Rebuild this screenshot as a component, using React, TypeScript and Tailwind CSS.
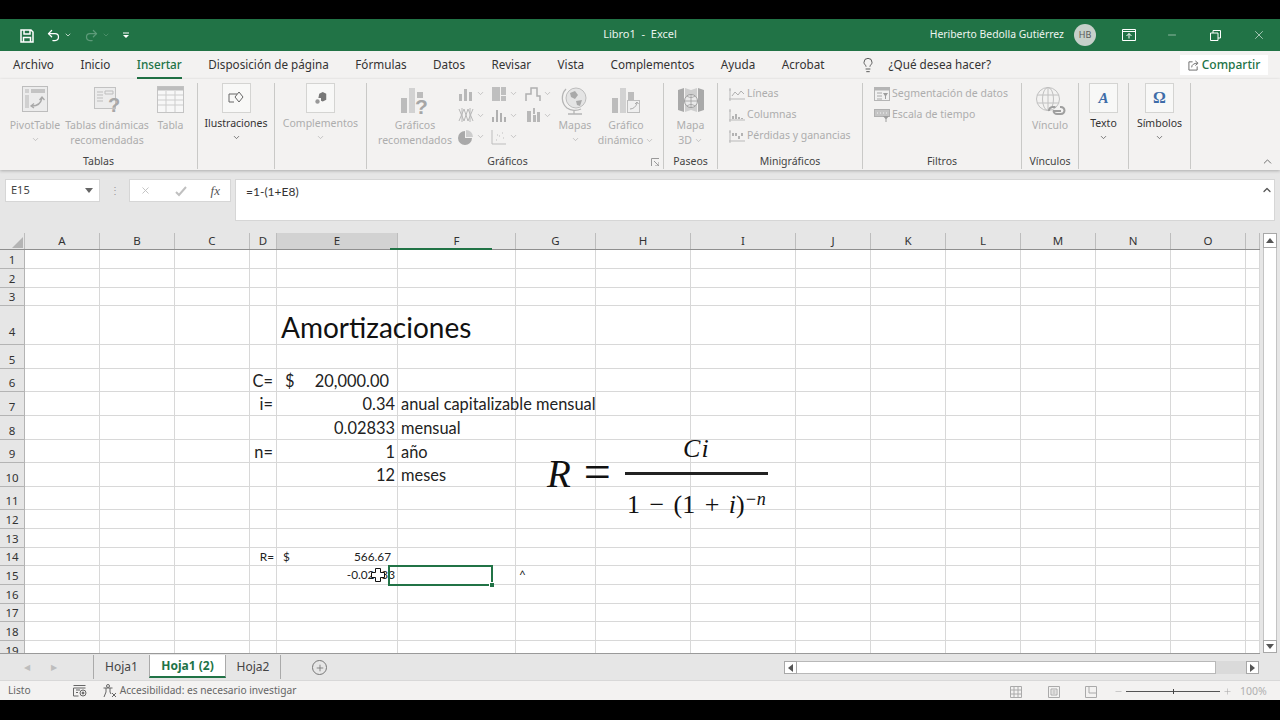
import React from "react"
import { ChevronDown, ChevronUp, Lightbulb, Undo2, Redo2, Minus, X, Plus } from "lucide-react"

const colWidths = [
  { name: "A", w: "w-[75px]" },
  { name: "B", w: "w-[75px]" },
  { name: "C", w: "w-[75px]" },
  { name: "D", w: "w-[27px]" },
  { name: "E", w: "w-[121px]" },
  { name: "F", w: "w-[118px]" },
  { name: "G", w: "w-[80px]" },
  { name: "H", w: "w-[95px]" },
  { name: "I", w: "w-[105px]" },
  { name: "J", w: "w-[75px]" },
  { name: "K", w: "w-[75px]" },
  { name: "L", w: "w-[75px]" },
  { name: "M", w: "w-[75px]" },
  { name: "N", w: "w-[75px]" },
  { name: "O", w: "w-[75px]" },
  { name: "", w: "w-[14px]" },
]

const rowHeights = [
  "h-[19px]", "h-[19px]", "h-[18px]", "h-[39px]", "h-[24px]", "h-[23px]", "h-[24px]", "h-[24px]", "h-[23px]", "h-[24px]",
  "h-[23px]", "h-[19px]", "h-[19px]", "h-[18px]", "h-[19px]", "h-[19px]", "h-[18px]", "h-[19px]", "h-[19px]",
]

const big = "text-[16.4px] text-[#222] mt-[2px]"
const small = "text-[11.8px] text-[#222]"

const cells: Record<string, React.ReactNode> = {
  E4: <span className="absolute left-[4px] mt-[3px] text-[28px] text-[#111]">Amortizaciones</span>,
  D6: <span className={`absolute right-[3px] ${big}`}>C=</span>,
  E6: (
    <span className={`absolute inset-x-0 flex justify-between pl-[8px] pr-[8px] ${big}`}>
      <span>$</span>
      <span>20,000.00</span>
    </span>
  ),
  D7: <span className={`absolute right-[3px] ${big}`}>i=</span>,
  E7: <span className={`absolute right-[2px] ${big}`}>0.34</span>,
  F7: <span className={`absolute left-[3px] ${big}`}>anual capitalizable mensual</span>,
  E8: <span className={`absolute right-[2px] ${big}`}>0.02833</span>,
  F8: <span className={`absolute left-[3px] ${big}`}>mensual</span>,
  D9: <span className={`absolute right-[3px] ${big}`}>n=</span>,
  E9: <span className={`absolute right-[2px] ${big}`}>1</span>,
  F9: <span className={`absolute left-[3px] ${big}`}>año</span>,
  E10: <span className={`absolute right-[2px] ${big}`}>12</span>,
  F10: <span className={`absolute left-[3px] ${big}`}>meses</span>,
  D14: <span className={`absolute right-[2px] ${small}`}>R=</span>,
  E14: (
    <span className={`absolute inset-x-0 flex justify-between pl-[6px] pr-[6px] ${small}`}>
      <span>$</span>
      <span>566.67</span>
    </span>
  ),
  E15: <span className={`absolute right-[2px] ${small}`}>-0.02833</span>,
  G15: <span className={`absolute left-[3px] ${small}`}>^</span>,
}

function Chev({ light }: { light?: boolean }) {
  return <ChevronDown className={`w-[9px] h-[9px] ${light ? "text-[#b5b5b5]" : "text-[#555]"}`} strokeWidth={2} />
}

function PivotIcon() {
  return (
    <svg viewBox="0 0 26 26" className="w-[26px] h-[26px]" fill="none">
      <rect x="0.5" y="0.5" width="25" height="25" fill="#ececec" stroke="#bdbdbd" />
      <rect x="3" y="3" width="4" height="4" fill="#d0d0d0" />
      <rect x="9" y="3" width="14" height="4" fill="#c4c4c4" />
      <rect x="3" y="9" width="4" height="13" fill="#d0d0d0" />
      <path d="M10 20c5 0 9-3 10-8M17.5 14l2.500-3 2.500 3M12 17.500l-3 2.500 3 2" stroke="#a9a9a9" strokeWidth="1.300" />
    </svg>
  )
}

function RecTableIcon() {
  return (
    <svg viewBox="0 0 28 28" className="w-[28px] h-[28px]" fill="none">
      <rect x="1.500" y="1.500" width="21" height="21" fill="#ececec" stroke="#c2c2c2" />
      <path d="M4 6h6M4 9h6M4 12h6M4 15h6M12 5h8v3h-8z" stroke="#bdbdbd" />
      <text x="15" y="26" fontSize="20" fontWeight="700" fill="#a8a8a8" fontFamily="Liberation Sans">?</text>
    </svg>
  )
}

function TableIcon() {
  return (
    <svg viewBox="0 0 27 27" className="w-[27px] h-[27px]" fill="none">
      <rect x="0.500" y="0.500" width="26" height="26" fill="#f7f7f7" stroke="#c4c4c4" />
      <rect x="0.500" y="0.500" width="26" height="4" fill="#bdbdbd" />
      <path d="M1 9h25M1 14h25M1 19h25M9 5v21M18 5v21" stroke="#cdcdcd" />
    </svg>
  )
}

function ChartRecIcon() {
  return (
    <svg viewBox="0 0 30 28" className="w-[30px] h-[28px]" fill="none">
      <rect x="1" y="12" width="6" height="15" fill="#bcbcbc" />
      <rect x="9" y="2" width="6" height="25" fill="#d2d2d2" />
      <rect x="17" y="6" width="6" height="6" fill="#bcbcbc" />
      <text x="15" y="28" fontSize="21" fontWeight="700" fill="#a6a6a6" fontFamily="Liberation Sans">?</text>
    </svg>
  )
}

function SmallChart({ kind }: { kind: string }) {
  return (
    <svg viewBox="0 0 16 16" className="w-[16px] h-[16px]" fill="none">
      {kind === "bar" && <path d="M1 8h3v7H1zM6 3h3v12H6zM11 6h3v9h-3z" fill="#b8b8b8" />}
      {kind === "tree" && <path d="M1 1h8v14H1zM10 1h5v8h-5zM10 10h5v5h-5z" fill="#bfbfbf" />}
      {kind === "step" && <path d="M1 15V8h5V2h6v8h3v5" stroke="#b0b0b0" strokeWidth="1.500" />}
      {kind === "stock" && <path d="M1 2l5 12 4-12 5 12M1 14l5-12 4 12 5-12M4 1v14M12 1v14" stroke="#b8b8b8" />}
      {kind === "hist" && <path d="M1 10h2v5H1zM5 3h2v12H5zM9 6h2v9H9zM13 10h2v5h-2z" fill="#b0b0b0" />}
      {kind === "box" && <path d="M2 4h4v11H2zM8 1h2v6H8zM8 8h3v7H8zM12 5h3v10h-3z" fill="#b8b8b8" />}
      {kind === "pie" && (
        <>
          <path d="M8 8V1a7 7 0 0 1 7 7z" fill="#cdcdcd" />
          <path d="M7 2v7h7a7 7 0 1 1-7-7z" fill="#a9a9a9" />
        </>
      )}
      {kind === "scatter" && (
        <path d="M1 1v14h14M5 11h1M8 7h1M11 4h1M6 6h1M12 9h1" stroke="#bdbdbd" />
      )}
    </svg>
  )
}

function GlobeIcon() {
  return (
    <svg viewBox="0 0 28 30" className="w-[28px] h-[30px]" fill="none">
      <circle cx="15" cy="12" r="10" fill="#e4e4e4" stroke="#bdbdbd" />
      <path d="M9 7l5-2 3 4-3 4-4-2zM15 15l6-1-2 6-3-1z" fill="#a9a9a9" />
      <path d="M5 3a13 13 0 0 0 1 19c4 3 10 3 14 1M13 25v3M7 28h14" stroke="#b5b5b5" strokeWidth="1.300" />
    </svg>
  )
}

function PivotChartIcon() {
  return (
    <svg viewBox="0 0 30 28" className="w-[30px] h-[28px]" fill="none">
      <rect x="1" y="12" width="6" height="15" fill="#bcbcbc" />
      <rect x="9" y="2" width="6" height="25" fill="#d2d2d2" />
      <rect x="17" y="6" width="6" height="8" fill="#bcbcbc" />
      <rect x="16.500" y="14.500" width="12" height="12" fill="#efefef" stroke="#bdbdbd" />
      <path d="M19 23c3 0 6-2 7-6M24 18l2-2 1.500 2" stroke="#aaa" />
    </svg>
  )
}

function Map3DIcon() {
  return (
    <svg viewBox="0 0 28 28" className="w-[28px] h-[28px]" fill="none">
      <path d="M1 4l6-2v24l-6-2zM21 2l6 2v20l-6 2z" fill="#a9a9a9" />
      <path d="M8 2l6 2v20l-6 2zM14 4l6-2v24l-6-2z" fill="#cfcfcf" />
      <circle cx="14" cy="15" r="6.500" fill="#e9e9e9" stroke="#9d9d9d" />
      <path d="M7.500 15h13M14 8.500v13M10 10c3 2 5 2 8 0M10 20c3-2 5-2 8 0" stroke="#9d9d9d" strokeWidth="0.800" />
    </svg>
  )
}

function SparkIcon({ kind }: { kind: string }) {
  return (
    <svg viewBox="0 0 16 14" className="w-[16px] h-[14px]" fill="none">
      <path d="M1 1v13M0 12h16M0 3h2" stroke="#b9b9b9" />
      {kind === "line" && <path d="M3 9l3-4 3 3 3-4 3 3" stroke="#b0b0b0" />}
      {kind === "col" && <path d="M4 11V8M7 11V6M10 11V9M13 11V10" stroke="#9f9f9f" strokeWidth="1.500" />}
      {kind === "wl" && <path d="M4 4v3M7 4v3M10 7v3M13 4v3" stroke="#9f9f9f" strokeWidth="1.500" />}
    </svg>
  )
}

function SlicerIcon() {
  return (
    <svg viewBox="0 0 16 14" className="w-[16px] h-[14px]" fill="none">
      <rect x="0.500" y="0.500" width="15" height="13" fill="#f1f1f1" stroke="#b5b5b5" />
      <rect x="1" y="1" width="14" height="2.500" fill="#b5b5b5" />
      <path d="M3 6h5M3 9h5M3 12h5" stroke="#a8a8a8" />
      <path d="M9 6h5l-2 3v3h-1V9z" fill="#9d9d9d" />
    </svg>
  )
}

function TimelineIcon() {
  return (
    <svg viewBox="0 0 16 14" className="w-[16px] h-[14px]" fill="none">
      <rect x="0.500" y="1.500" width="15" height="7" fill="#c4c4c4" stroke="#b0b0b0" />
      <path d="M3 5h1M6 5h1M9 5h1M12 5h1" stroke="#f5f5f5" />
      <path d="M9 8h6l-2.500 3v3h-1v-3z" fill="#9d9d9d" />
    </svg>
  )
}

function LinkGlobeIcon() {
  return (
    <svg viewBox="0 0 32 32" className="w-[32px] h-[32px]" fill="none">
      <circle cx="14" cy="13" r="11.500" stroke="#c0c0c0" />
      <ellipse cx="14" cy="13" rx="5.500" ry="11.500" stroke="#c0c0c0" />
      <path d="M3 9h22M3 17h22M14 1.500v23" stroke="#c0c0c0" />
      <path d="M15 25a3.500 3.500 0 0 1 3.500-4h3M26 21h1a3.500 3.500 0 0 1 0 7h-4a3.500 3.500 0 0 1-3.500-3.500M19 25h8" stroke="#9f9f9f" strokeWidth="2" />
    </svg>
  )
}

function BigBtn({
  width,
  icon,
  lines,
  disabled,
  chevron,
  boxed,
  inlineChev,
}: {
  width: string
  icon: React.ReactNode
  lines: string[]
  disabled?: boolean
  chevron?: boolean
  boxed?: boolean
  inlineChev?: boolean
}) {
  return (
    <div className={`flex flex-col items-center shrink-0 ${width}`}>
      {boxed ? (
        <div className="w-[29px] h-[30px] bg-[#f8f8f7] border border-[#d4d4d2] flex items-center justify-center">{icon}</div>
      ) : (
        <div className="h-[35px] pt-[3px] flex items-start justify-center">{icon}</div>
      )}
      <div className={`text-[10.5px] leading-[15px] text-center whitespace-nowrap ${boxed ? "mt-[3px]" : ""} ${disabled ? "text-[#adadad]" : "text-[#333]"}`}>
        {lines.map((l, i) => (
          <div key={l} className="flex items-center justify-center gap-[2px]">
            {l}
            {inlineChev && i === lines.length - 1 && <Chev light />}
          </div>
        ))}
      </div>
      {chevron && (
        <div className="mt-[2px]">
          <Chev light={disabled} />
        </div>
      )}
    </div>
  )
}

function Group({
  className,
  label,
  labelClass,
  children,
}: {
  className: string
  label?: string
  labelClass?: string
  children: React.ReactNode
}) {
  return (
    <div className={`h-[86px] shrink-0 flex flex-col border-r border-[#c9c9c7] relative ${className}`}>
      <div className="flex-1 flex items-start min-h-0">{children}</div>
      <div className={`h-[15px] text-[10.5px] leading-[15px] text-[#444] text-center ${labelClass ?? ""}`}>{label}</div>
    </div>
  )
}

function SmallRow({ icon, label }: { icon: React.ReactNode; label: string }) {
  return (
    <div className="h-[21px] flex items-center gap-[2px] text-[10.5px] text-[#adadad] whitespace-nowrap">
      {icon}
      {label}
    </div>
  )
}

function ChartCell({ kind }: { kind: string }) {
  return (
    <div className="h-[21px] w-[33px] flex items-center gap-[2px]">
      <SmallChart kind={kind} />
      <Chev light />
    </div>
  )
}

function Ribbon() {
  return (
    <div className="h-[91px] bg-[#f3f2f1] flex pt-[4px] shadow-[0_1px_3px_rgba(0,0,0,0.25)] relative">
      <Group className="w-[198px]" label="Tablas">
        <div className="flex pl-[9px]">
          <BigBtn width="w-[52px]" icon={<PivotIcon />} lines={["PivotTable"]} disabled chevron />
          <BigBtn width="w-[84px] ml-[4px]" icon={<RecTableIcon />} lines={["Tablas dinámicas", "recomendadas"]} disabled />
          <BigBtn width="w-[27px] ml-[8px]" icon={<TableIcon />} lines={["Tabla"]} disabled />
        </div>
      </Group>
      <Group className="w-[77px]">
        <BigBtn
          width="w-full"
          boxed
          icon={
            <svg viewBox="0 0 16 16" className="w-[16px] h-[16px]" fill="none" stroke="#666">
              <path d="M6 12H1V4h8M7 7l4-5 4 5-4 5z" />
            </svg>
          }
          lines={["Ilustraciones"]}
          chevron
        />
      </Group>
      <Group className="w-[92px]">
        <BigBtn
          width="w-full"
          boxed
          disabled
          icon={
            <svg viewBox="0 0 16 16" className="w-[14px] h-[14px]">
              <path d="M6 3l4-2 4 2v7l-4 2-2-1V8H5z" fill="#777" />
              <circle cx="4" cy="12" r="2.500" fill="#999" />
            </svg>
          }
          lines={["Complementos"]}
          chevron
        />
      </Group>
      <Group className="w-[297px]" label="Gráficos" labelClass="pr-[15px]">
        <div className="flex">
          <BigBtn width="w-[76px] ml-[10px]" icon={<ChartRecIcon />} lines={["Gráficos", "recomendados"]} disabled />
          <div className="w-[100px] ml-[5px] grid grid-cols-3">
            <ChartCell kind="bar" />
            <ChartCell kind="tree" />
            <ChartCell kind="step" />
            <ChartCell kind="stock" />
            <ChartCell kind="hist" />
            <ChartCell kind="box" />
            <ChartCell kind="pie" />
            <ChartCell kind="scatter" />
          </div>
          <BigBtn width="w-[40px] ml-[-3px]" icon={<GlobeIcon />} lines={["Mapas"]} disabled chevron />
          <BigBtn width="w-[60px] ml-[1px]" icon={<PivotChartIcon />} lines={["Gráfico", "dinámico"]} disabled inlineChev />
        </div>
        <svg viewBox="0 0 8 8" className="absolute right-[4px] bottom-[3px] w-[8px] h-[8px]" fill="none" stroke="#999">
          <path d="M0.500 8V0.500H8M3 3l5 5M8 4v4H4" />
        </svg>
      </Group>
      <Group className="w-[54px]" label="Paseos">
        <BigBtn width="w-full" icon={<Map3DIcon />} lines={["Mapa", "3D"]} disabled inlineChev />
      </Group>
      <Group className="w-[145px]" label="Minigráficos">
        <div className="pl-[11px] flex flex-col">
          <SmallRow icon={<SparkIcon kind="line" />} label="Líneas" />
          <SmallRow icon={<SparkIcon kind="col" />} label="Columnas" />
          <SmallRow icon={<SparkIcon kind="wl" />} label="Pérdidas y ganancias" />
        </div>
      </Group>
      <Group className="w-[159px]" label="Filtros">
        <div className="pl-[11px] flex flex-col">
          <SmallRow icon={<SlicerIcon />} label="Segmentación de datos" />
          <SmallRow icon={<TimelineIcon />} label="Escala de tiempo" />
        </div>
      </Group>
      <Group className="w-[57px]" label="Vínculos">
        <BigBtn width="w-full" icon={<LinkGlobeIcon />} lines={["Vínculo"]} disabled />
      </Group>
      <Group className="w-[50px]">
        <BigBtn
          width="w-full"
          boxed
          icon={<span className="text-[15px] leading-none font-bold italic text-[#3e6ca8] font-['Liberation_Serif',serif]">A</span>}
          lines={["Texto"]}
          chevron
        />
      </Group>
      <Group className="w-[62px]">
        <BigBtn
          width="w-full"
          boxed
          icon={<span className="text-[16px] leading-none font-bold text-[#3e6ca8] font-['Liberation_Serif',serif]">Ω</span>}
          lines={["Símbolos"]}
          chevron
        />
      </Group>
      <ChevronUp className="absolute right-[6px] bottom-[2px] w-[13px] h-[13px] text-[#555]" strokeWidth={1.500} />
    </div>
  )
}

function TitleBar() {
  return (
    <div className="h-[32px] bg-[#217346] flex items-center text-white">
      <div className="w-[560px] flex items-center pl-[20px]">
        <svg viewBox="0 0 14 14" className="w-[14px] h-[14px] mt-[2px]" fill="none" stroke="white" strokeWidth="1.500">
          <path d="M1 1h10l2 2v10H1zM4 1v4h6V1M3.500 13V8.500h7V13" />
        </svg>
        <Undo2 className="w-[15px] h-[15px] ml-[12px]" strokeWidth={2} />
        <ChevronDown className="w-[8px] h-[8px] ml-[3px]" strokeWidth={2} />
        <Redo2 className="w-[15px] h-[15px] ml-[12px] text-[#5d9a79]" strokeWidth={2} />
        <ChevronDown className="w-[8px] h-[8px] ml-[3px] text-[#5d9a79]" strokeWidth={2} />
        <svg viewBox="0 0 8 8" className="w-[8px] h-[8px] ml-[12px]" fill="white">
          <path d="M1 1.500h6v1H1zM1 4h6L4 7z" />
        </svg>
      </div>
      <div className="w-[160px] text-center text-[11px] text-[#e9f2ec] mb-[2px]">Libro1&nbsp; -&nbsp; Excel</div>
      <div className="flex-1 flex items-center justify-end">
        <span className="text-[10.4px] text-[#eef5f0]">Heriberto Bedolla Gutiérrez</span>
        <div className="w-[22px] h-[22px] ml-[10px] rounded-full bg-[#c6d0ca] text-[#5a5a5a] text-[9px] flex items-center justify-center">HB</div>
        <svg viewBox="0 0 14 12" className="w-[14px] h-[12px] ml-[26px]" fill="none" stroke="white">
          <path d="M0.500 0.500h13v11H0.500zM0.500 2.500h13M7 9.500V4.500M4.500 7L7 4.500 9.500 7" />
        </svg>
        <Minus className="w-[12px] h-[12px] ml-[30px]" strokeWidth={1} />
        <svg viewBox="0 0 11 11" className="w-[11px] h-[11px] ml-[32px]" fill="none" stroke="white">
          <path d="M0.500 3h7.500v7.500H0.500zM3 3V0.500h7.500V8H8" />
        </svg>
        <X className="w-[14px] h-[14px] ml-[31px] mr-[14px]" strokeWidth={1} />
      </div>
    </div>
  )
}

function TabsBar() {
  const tabs = ["Archivo", "Inicio", "Insertar", "Disposición de página", "Fórmulas", "Datos", "Revisar", "Vista", "Complementos", "Ayuda", "Acrobat"]
  return (
    <div className="h-[28px] bg-[#f3f2f1] flex items-center pl-[13px] text-[11.7px] text-[#333] relative">
      <div className="flex gap-[26.5px]">
        {tabs.map((t) => (
          <div key={t} className={`relative ${t === "Insertar" ? "text-[#217346] font-medium" : ""}`}>
            {t}
            {t === "Insertar" && <div className="absolute left-0 right-0 bottom-[-5px] h-[2px] bg-[#217346]" />}
          </div>
        ))}
      </div>
      <Lightbulb className="w-[16px] h-[16px] ml-[36px] text-[#444]" strokeWidth={1.300} />
      <span className="ml-[12px]">¿Qué desea hacer?</span>
      <div className="absolute right-[12px] top-[4px] w-[88px] h-[20px] bg-white flex items-center justify-center gap-[3px] text-[#217346] text-[12px] font-medium">
        <svg viewBox="0 0 12 12" className="w-[11px] h-[11px]" fill="none" stroke="#666">
          <path d="M5 2H1v9h9V7M4 8c0-3 3-4.500 6-4.500M8 1l3 2.500L8 6" />
        </svg>
        Compartir
      </div>
    </div>
  )
}

function FormulaBar() {
  return (
    <div className="h-[63px] bg-[#e6e6e6] flex items-start pt-[9px] pl-[5px] text-[11px] text-[#444]">
      <div className="w-[95px] h-[23px] bg-white border border-[#d6d6d6] flex items-center justify-between pl-[5px] pr-[6px]">
        E15
        <svg viewBox="0 0 8 5" className="w-[8px] h-[5px]" fill="#666">
          <path d="M0 0h8L4 5z" />
        </svg>
      </div>
      <div className="w-[29px] h-[23px] flex items-center justify-center text-[#999] text-[10px]">⋮</div>
      <div className="w-[102px] h-[23px] bg-white border border-[#d6d6d6] flex items-center justify-between px-[10px]">
        <X className="w-[11px] h-[11px] text-[#c0c0c0]" strokeWidth={2} />
        <svg viewBox="0 0 12 12" className="w-[12px] h-[12px]" fill="none" stroke="#c0c0c0" strokeWidth="2">
          <path d="M1 7l3 3 7-8" />
        </svg>
        <span className="italic font-['Liberation_Serif',serif] text-[13px] text-[#555]">fx</span>
      </div>
      <div className="w-[1040px] h-[42px] ml-[4px] bg-white border border-[#d6d6d6] pl-[10px] pt-[3px] relative font-['Lato',sans-serif] text-[12px] text-[#333]">
        =1-(1+E8)
        <ChevronUp className="absolute right-[1px] top-[4px] w-[12px] h-[12px] text-[#555]" strokeWidth={2.500} />
      </div>
    </div>
  )
}

function Grid() {
  return (
    <div className="relative h-[422px] flex bg-[#e6e6e6] overflow-hidden">
      <div className="w-[1260px] shrink-0 flex flex-col h-[421px] border-b border-[#9a9a9a] overflow-hidden">
        <div className="h-[17px] shrink-0 flex bg-[#e6e6e6] border-b border-[#8f8f8f]">
          <div className="w-[25px] shrink-0 border-r border-[#bdbdbd] relative">
            <svg viewBox="0 0 12 12" className="absolute right-[1px] bottom-[1px] w-[11px] h-[11px]">
              <path d="M12 0v12H0z" fill="#b4b4b4" />
            </svg>
          </div>
          {colWidths.map((c) => (
            <div
              key={c.name || "end"}
              className={`shrink-0 ${c.w} border-r border-[#bdbdbd] text-[11.5px] leading-[15px] text-center text-[#333] ${c.name === "E" ? "bg-[#d2d2d2]" : ""}`}
            >
              {c.name}
            </div>
          ))}
        </div>
        <div className="flex-1 min-h-0 flex flex-col bg-white border-r border-[#9a9a9a] font-['Lato',sans-serif]">
          {rowHeights.map((h, r) => (
            <div key={r} className={`${h} shrink-0 flex`}>
              <div
                className={`w-[25px] shrink-0 bg-[#e6e6e6] border-r border-b border-[#b4b4b4] text-[11.5px] text-center text-[#333] flex items-end justify-center font-['Noto_Sans',sans-serif] ${r === 14 ? "bg-[#d2d2d2]" : ""} ${r === 3 ? "pb-[4px]" : ""}`}
              >
                {r + 1}
              </div>
              {colWidths.map((c) => (
                <div
                  key={c.name || "end"}
                  className={`shrink-0 ${c.w} border-r border-b border-[#d8d8d8] relative flex items-center whitespace-nowrap`}
                >
                  {cells[`${c.name}${r + 1}`]}
                </div>
              ))}
            </div>
          ))}
        </div>
      </div>
      <div className="flex-1 flex flex-col items-center pb-[2px] px-[3px]">
        <div className="w-[14px] h-[15px] bg-white border border-[#a8a8a8] flex items-center justify-center">
          <svg viewBox="0 0 8 5" className="w-[8px] h-[5px]" fill="#555">
            <path d="M4 0l4 5H0z" />
          </svg>
        </div>
        <div className="flex-1 w-[14px] bg-white border-x border-[#c4c4c4]" />
        <div className="w-[14px] h-[13px] bg-white border border-[#a8a8a8] flex items-center justify-center">
          <svg viewBox="0 0 8 5" className="w-[8px] h-[5px]" fill="#555">
            <path d="M0 0h8L4 5z" />
          </svg>
        </div>
      </div>

      {/* active column underline and selected cell */}
      <div className="absolute left-[390px] top-[15px] w-[102px] h-[2px] bg-[#217346]" />
      <div className="absolute left-[388px] top-[332px] w-[105px] h-[21px] border-2 border-[#217346]">
        <div className="absolute right-[-3px] bottom-[-3px] w-[5px] h-[5px] bg-[#217346] border-l border-t border-white" />
      </div>
      <svg viewBox="0 0 14 14" className="absolute left-[371px] top-[335px] w-[14px] h-[14px]">
        <path d="M4.500 0.500h5v4h4v5h-4v4h-5v-4h-4v-5h4z" fill="white" stroke="#111" />
      </svg>

      {/* floating equation */}
      <div className="absolute left-[547px] top-[194px] h-[93px] flex items-center font-['Liberation_Serif',serif] text-[#111]">
        <span className="italic text-[39px] leading-none">R</span>
        <span className="text-[48px] leading-none ml-[13px] mb-[4px]">=</span>
        <div className="ml-[14px] w-[143px] flex flex-col items-center">
          <div className="h-[45px] flex items-end pb-[8px]">
            <span className="italic text-[26px] leading-[30px] tracking-[1px]">Ci</span>
          </div>
          <div className="w-full h-[3px] bg-[#222]" />
          <div className="h-[45px] pt-[15px] w-full whitespace-nowrap flex items-start justify-between px-[2px] text-[26px] leading-[30px]">
            <span>1</span>
            <span>−</span>
            <span>(1</span>
            <span>+</span>
            <span className="flex items-start">
              <span className="italic">i</span>)
              <span className="text-[18px] leading-[18px] italic">−n</span>
            </span>
          </div>
        </div>
      </div>
    </div>
  )
}

function SheetTabs() {
  return (
    <div className="h-[25px] bg-[#e6e6e6] flex items-start text-[12px] text-[#444] relative">
      <div className="w-[94px] h-[24px] flex items-center pl-[24px] gap-[21px] text-[#bdbdbd] text-[8px] border-r border-[#aaa]">
        <span>◀</span>
        <span>▶</span>
      </div>
      <div className="w-[55px] h-[24px] flex items-center justify-center">Hoja1</div>
      <div className="w-[77px] h-[23px] pt-[1px] bg-white border-x border-b-2 border-x-[#aaa] border-b-[#217346] flex items-center justify-center font-bold text-[#217346]">Hoja1 (2)</div>
      <div className="w-[55px] h-[24px] flex items-center justify-center border-r border-[#aaa]">Hoja2</div>
      <div className="ml-[31px] mt-[5px] w-[15px] h-[15px] rounded-full border border-[#777] flex items-center justify-center">
        <Plus className="w-[10px] h-[10px] text-[#777]" strokeWidth={2} />
      </div>
      <div className="absolute left-[784px] top-[6px] w-[475px] h-[13px] flex">
        <div className="w-[13px] h-[13px] bg-white border border-[#a8a8a8] flex items-center justify-center">
          <svg viewBox="0 0 5 8" className="w-[5px] h-[8px]" fill="#555">
            <path d="M5 0v8L0 4z" />
          </svg>
        </div>
        <div className="w-[419px] bg-white border-y border-r border-[#b8b8b8]" />
        <div className="flex-1 bg-[#dadada]" />
        <div className="w-[13px] h-[13px] bg-white border border-[#a8a8a8] flex items-center justify-center">
          <svg viewBox="0 0 5 8" className="w-[5px] h-[8px]" fill="#555">
            <path d="M0 0v8l5-4z" />
          </svg>
        </div>
      </div>
    </div>
  )
}

function StatusBar() {
  return (
    <div className="h-[20px] bg-[#f3f2f1] border-t border-[#d8d8d8] flex items-center text-[10.2px] text-[#666] pl-[8px] relative">
      Listo
      <svg viewBox="0 0 14 12" className="w-[14px] h-[12px] ml-[42px]" fill="none" stroke="#666">
        <path d="M0.500 0.500h12M0.500 3h12M0.500 3v8h5M3 5h4M3 7.500h2" />
        <circle cx="10" cy="8" r="3" />
        <circle cx="10" cy="8" r="1" fill="#666" />
      </svg>
      <svg viewBox="0 0 14 14" className="w-[14px] h-[14px] ml-[16px]" fill="none" stroke="#666">
        <circle cx="5" cy="2" r="1.500" />
        <path d="M0.500 4h9M3 4v4l-2 5M7 4v4l1 2M9 9l4 4M13 9l-4 4" />
      </svg>
      <span className="ml-[3px]">Accesibilidad: es necesario investigar</span>
      <div className="absolute left-[1010px] top-[3px] flex items-center text-[#aaa]">
        <svg viewBox="0 0 12 12" className="w-[12px] h-[12px]" fill="none" stroke="#aaa">
          <path d="M0.500 0.500h11v11h-11zM4 0.500v11M8 0.500v11M0.500 4h11M0.500 8h11" />
        </svg>
        <svg viewBox="0 0 12 12" className="w-[12px] h-[12px] ml-[26px]" fill="none" stroke="#aaa">
          <path d="M0.500 0.500h11v11h-11zM3 3h6v6H3zM4.500 5h3M4.500 7h3" />
        </svg>
        <svg viewBox="0 0 12 12" className="w-[12px] h-[12px] ml-[25px]" fill="none" stroke="#aaa">
          <path d="M0.500 0.500h11v11h-11zM4 0.500V7h7.500" />
        </svg>
        <Minus className="w-[9px] h-[9px] ml-[17px]" strokeWidth={1.500} />
        <div className="w-[94px] h-px bg-[#555] ml-[3px] relative">
          <div className="absolute left-[47px] top-[-2px] w-px h-[5px] bg-[#444]" />
        </div>
        <Plus className="w-[9px] h-[9px] ml-[3px]" strokeWidth={1.500} />
        <span className="ml-[8px] text-[10.5px] text-[#b0b0b0]">100%</span>
      </div>
    </div>
  )
}

export default function App() {
  return (
    <div className="w-[1280px] h-[720px] overflow-hidden bg-black flex flex-col font-['Noto_Sans','Open_Sans',sans-serif]">
      <div className="h-[19px] shrink-0" />
      <TitleBar />
      <TabsBar />
      <Ribbon />
      <FormulaBar />
      <Grid />
      <SheetTabs />
      <StatusBar />
    </div>
  )
}
